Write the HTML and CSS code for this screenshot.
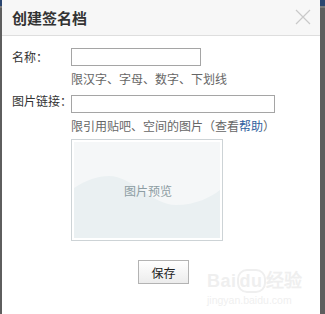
FILE: index.html
```html
<!DOCTYPE html>
<html lang="zh-CN">
<head>
<meta charset="utf-8">
<title>创建签名档</title>
<link rel="stylesheet" href="styles.css">
</head>
<body>
<div class="dialog">
  <div class="header">
    <h1 class="title">创建签名档</h1>
    <svg class="close" width="16" height="16" viewBox="0 0 16 16" aria-label="关闭">
      <path d="M1 1 L15 15 M15 1 L1 15" stroke="#c9c9c9" stroke-width="1.2" fill="none"/>
    </svg>
  </div>
  <div class="body">
    <div class="form">
      <label class="label">名称：</label>
      <input class="field field-short" type="text">
      <span></span>
      <div class="hint">限汉字、字母、数字、下划线</div>
      <label class="label">图片链接：</label>
      <input class="field field-long" type="text">
      <span></span>
      <div class="hint">限引用贴吧、空间的图片（查看<a class="link" href="#">帮助</a>）</div>
      <span></span>
      <div class="preview">
        <svg class="preview-bg" width="150" height="100" viewBox="0 0 150 100">
          <rect x="2" y="2" width="146" height="96" fill="#f5f7f8"/>
          <path d="M2 48 C 14 40 26 36 37 36 C 60 36 80 65 104 65 C 124 65 139 57 148 50 L148 98 L2 98 Z" fill="#eaf0f2"/>
        </svg>
        <span class="preview-text">图片预览</span>
      </div>
    </div>
    <div class="actions">
      <button class="btn" type="button">保存</button>
    </div>
  </div>
  <div class="watermark">
    <span class="wm-logo">Bai<span class="wm-du">du</span>经验</span>
    <span class="wm-url">jingyan.baidu.com</span>
  </div>
</div>
</body>
</html>
```

FILE: styles.css
```css
html, body {
  margin: 0;
  padding: 0;
}
body {
  width: 325px;
  height: 314px;
  overflow: hidden;
  background: linear-gradient(to bottom, #2b4670 0, #2b4670 6px, #7a7a7a 6px, #7a7a7a 8px, #5e5e5e 8px, #5e5e5e 100%);
  font-family: "Noto Sans CJK SC", "Noto Sans", sans-serif;
  font-size: 12px;
  color: #333;
}
.dialog {
  position: relative;
  margin-left: 2px;
  width: 318px;
  height: 314px;
  background: #fff;
}
.header {
  box-sizing: border-box;
  height: 36px;
  background: #f7f7f7;
  border-bottom: 1px solid #dedede;
  display: flex;
  align-items: center;
  justify-content: space-between;
  padding: 0 9px 0 10px;
}
.title {
  margin: 0;
  font-size: 15px;
  font-weight: bold;
  color: #333;
  line-height: 20px;
}
.close {
  display: block;
  margin-top: -2px;
}
.body {
  padding: 12px 10px 0 10px;
}
.form {
  display: grid;
  grid-template-columns: 59px auto;
  justify-items: start;
  align-items: center;
}
.label {
  color: #333;
  line-height: 18px;
  white-space: nowrap;
}
.field {
  box-sizing: border-box;
  height: 18px;
  margin: 0;
  padding: 0 2px;
  border: 1px solid #a5a5a5;
  background: #fff;
  font: inherit;
}
.field-short {
  width: 130px;
}
.field-long {
  width: 204px;
  margin-top: 7px;
}
.hint {
  color: #666;
  line-height: 18px;
  margin-top: 4px;
  white-space: nowrap;
}
.link {
  color: #2e5f9e;
  text-decoration: none;
}
.preview {
  position: relative;
  box-sizing: border-box;
  width: 152px;
  height: 102px;
  margin-top: 4px;
  border: 1px solid #cdd3d6;
  display: flex;
  align-items: center;
  justify-content: center;
}
.preview-bg {
  position: absolute;
  left: 0;
  top: 0;
}
.preview-text {
  position: relative;
  color: #8d9da3;
  font-size: 12px;
  margin-left: 2px;
}
.actions {
  display: flex;
  justify-content: center;
  padding-left: 5px;
  margin-top: 19px;
}
.btn {
  box-sizing: border-box;
  width: 51px;
  height: 24px;
  padding: 0;
  border: 1px solid #b3b3b3;
  background: linear-gradient(to bottom, #ffffff, #ececec);
  font-family: "Noto Sans CJK SC", sans-serif;
  font-size: 12px;
  color: #222;
}
.watermark {
  position: absolute;
  left: 205px;
  top: 270px;
  display: flex;
  flex-direction: column;
  color: #efefef;
  pointer-events: none;
}
.wm-logo {
  font-family: "Liberation Sans", sans-serif;
  font-size: 18px;
  font-weight: bold;
  line-height: 22px;
  letter-spacing: 0.5px;
}
.wm-du {
  border: 2px solid #efefef;
  border-radius: 10px;
  padding: 0 1px;
}
.wm-url {
  font-family: "Liberation Sans", sans-serif;
  font-size: 10.5px;
  line-height: 12px;
  margin-top: 2px;
}
```
